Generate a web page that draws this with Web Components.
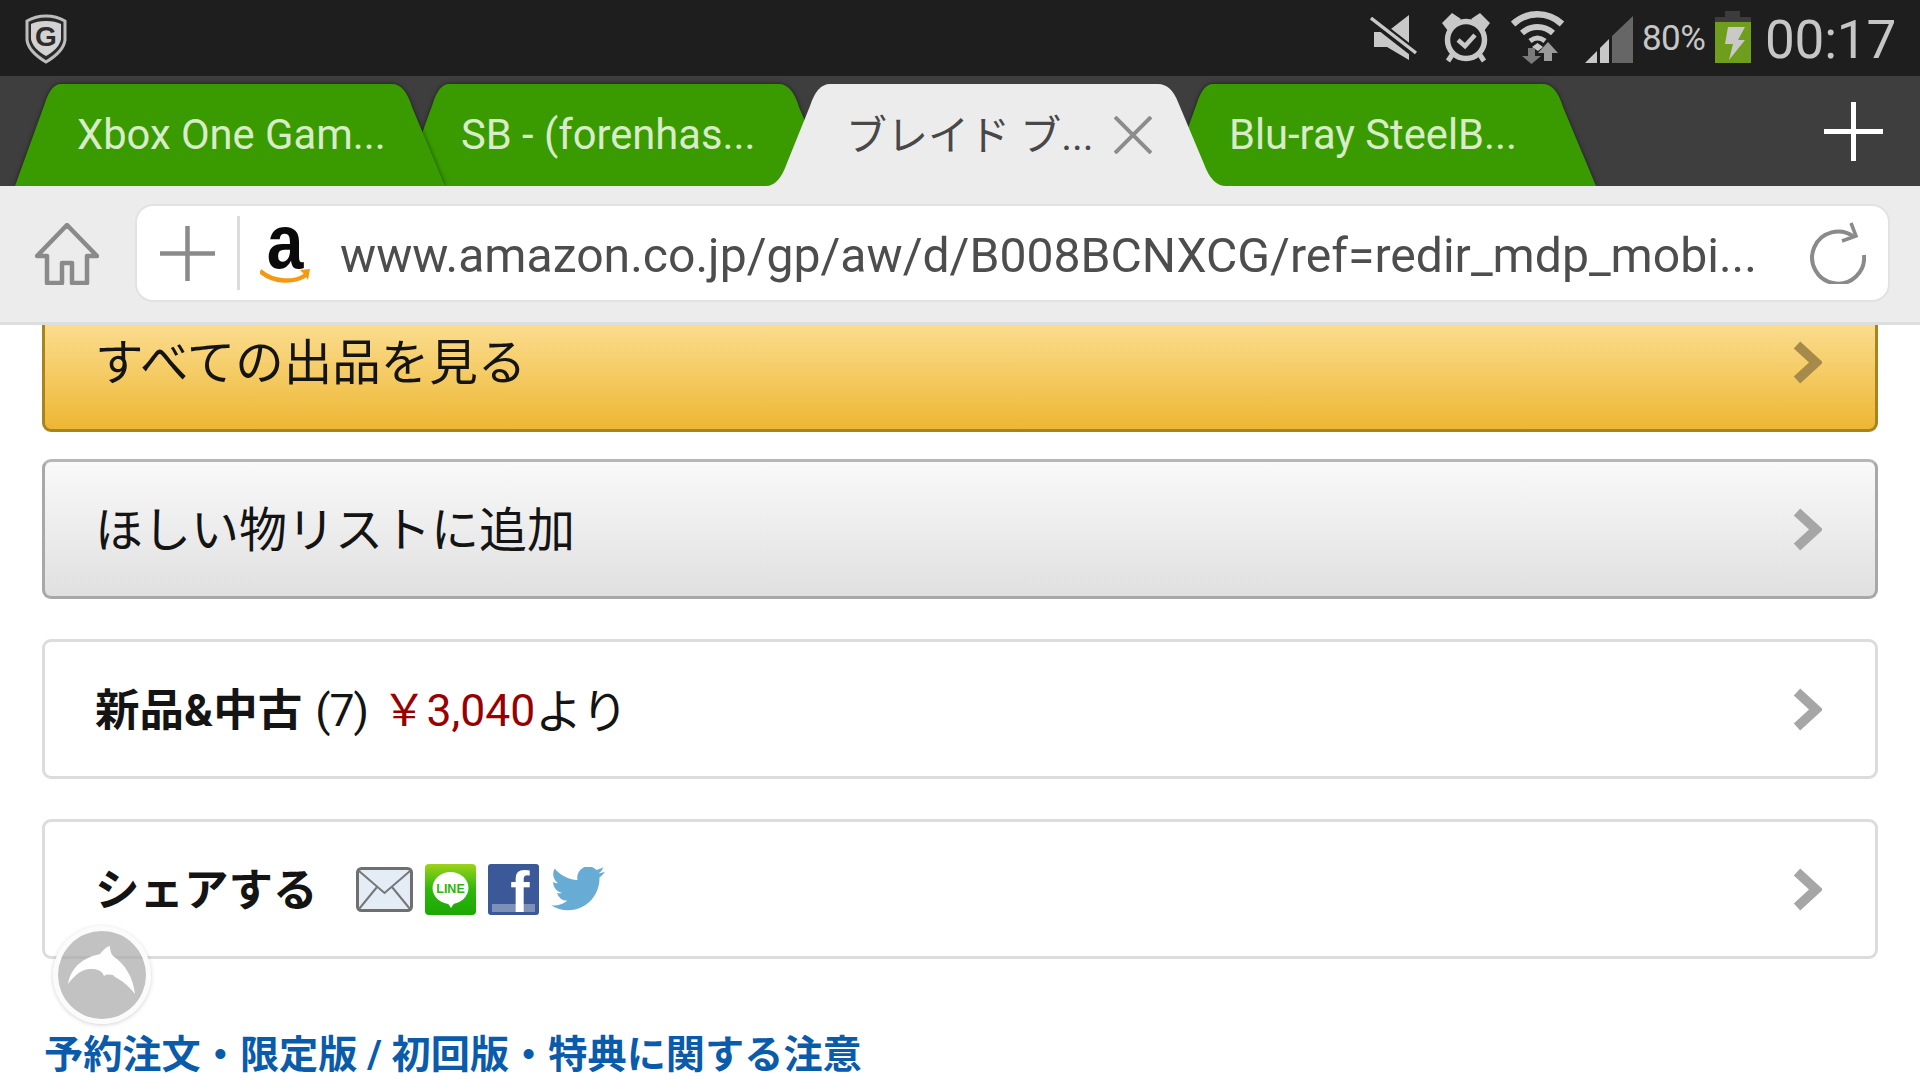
<!DOCTYPE html>
<html lang="ja"><head><meta charset="utf-8"><title>Browser</title>
<style>
html,body{margin:0;padding:0;background:#fff}
body{width:1920px;height:1080px;overflow:hidden;display:flex;flex-direction:column;font-family:Roboto,"Noto Sans CJK JP",sans-serif;position:relative}
</style></head><body>
<status-bar></status-bar>
<tab-strip>
  <browser-tab w="430" pad="62" z="2" gap="0">Xbox One Gam...</browser-tab>
  <browser-tab w="429" pad="58" z="1" gap="-42">SB - (forenhas...</browser-tab>
  <browser-tab w="460" pad="80" z="3" gap="-66" active>ブレイド ブ...</browser-tab>
  <browser-tab w="429" pad="62" z="1" gap="-59">Blu-ray SteelB...</browser-tab>
</tab-strip>
<url-bar>www.amazon.co.jp/gp/aw/d/B008BCNXCG/ref=redir_mdp_mobi...</url-bar>
<page-content>
  <action-row variant="yellow">すべての出品を見る</action-row>
  <action-row variant="gray">ほしい物リストに追加</action-row>
  <action-row variant="plain"><b>新品&amp;中古</b><span style="font-weight:400;margin-left:13px;letter-spacing:-1px">(7)</span><span style="color:#990000;font-weight:400;margin-left:14px">￥3,040</span><span style="font-size:47px">より</span></action-row>
  <action-row variant="plain"><b>シェアする</b><share-icons></share-icons></action-row>
  <notice-link>予約注文・限定版 / 初回版・特典に関する注意</notice-link>
</page-content>
<dolphin-fab></dolphin-fab>
<script>
function def(name,html){
  customElements.define(name,class extends HTMLElement{
    connectedCallback(){
      if(this.shadowRoot)return;
      const r=this.attachShadow({mode:'open'});
      r.innerHTML=typeof html==='function'?html(this):html;
    }
  });
}
def('status-bar',`<style>
:host{display:flex;align-items:flex-start;height:76px;background:#1e1e1e;flex:none;color:#c6c6c6;font-family:Roboto,sans-serif}
svg{display:block;flex:none}
.pct{font-size:35px;line-height:76px;margin-left:9px;letter-spacing:-.6px;height:76px;width:67px;transform:translateY(1px)}
.time{font-size:53px;font-weight:400;line-height:76px;margin-left:14px;letter-spacing:-.2px;transform:translateY(2px)}
</style>
<svg width="44" height="50" viewBox="0 0 44 50" style="margin:14px 0 0 24px">
 <path d="M22 2C14 2 8 4 3 7v19c1 9 9 16 19 22 10-6 18-13 19-22V7C36 4 30 2 22 2z" fill="#2a2a2a" stroke="#bdbdbd" stroke-width="3"/>
 <path d="M22 7c-6 0-11 1-15 3v15c1 7 8 13 15 17 7-4 14-10 15-17V10c-4-2-9-3-15-3z" fill="#d2d2d2"/>
 <text x="22" y="32" text-anchor="middle" font-family="Liberation Sans" font-weight="700" font-size="28" fill="#2c2c2c">G</text>
</svg>
<svg width="48" height="46" viewBox="0 0 48 46" style="margin:15px 0 0 1302px">
 <path d="M4 17H17L39 0V45L17 32H4z" fill="#c8c8c8"/>
 <path d="M0 3L46 39" stroke="#1e1e1e" stroke-width="9"/>
 <path d="M1 3L46 38" stroke="#c8c8c8" stroke-width="3.4"/>
</svg>
<svg width="48" height="50" viewBox="0 0 48 50" style="margin:13px 0 0 24px" fill="none" stroke="#c8c8c8">
 <circle cx="24" cy="27" r="18.500" stroke-width="5.500"/>
 <path d="M16 27l7 6 10-11" stroke-width="4.5"/>
 <path d="M0 10L10 0 19 6 6 18z M48 10L38 0 29 6 42 18z" fill="#c8c8c8" stroke="none"/>
 <path d="M10 42l-4 6M38 42l4 6" stroke-width="5"/>
</svg>
<svg width="54" height="54" viewBox="0 0 54 54" style="margin:10px 0 0 21px" fill="none" stroke="#c8c8c8">
 <path d="M2 14C16 1 37 1 51 14" stroke-width="6.5"/>
 <path d="M11 23C20 15 33 15 42 23" stroke-width="6"/>
 <path d="M19 31C24 27 29 27 34 31" stroke-width="5"/>
 <path d="M21 37L26.500 33 32 37 27 41z" fill="#c8c8c8" stroke="none"/>
 <path d="M17 38h7v8h6L20.500 54 11 46h6z" fill="#7a7a7a" stroke="none"/>
 <path d="M37 32l10 11h-6v8h-8V43h-6z" fill="#9a9a9a" stroke="none"/>
</svg>
<svg width="48" height="48" viewBox="0 0 48 48" style="margin:16px 0 0 20px">
 <path d="M0 47L12 35V47z" fill="#c8c8c8"/><path d="M15 32L24 23V47H15z" fill="#c8c8c8"/><path d="M27 20L48 0V47H27z" fill="#666"/>
</svg>
<span class="pct">80%</span>
<svg width="36" height="52" viewBox="0 0 36 52" style="margin:11px 0 0 6px">
 <rect x="10" width="15" height="7" fill="#3c3c3c"/><rect y="6" width="36" height="6" fill="#3c3c3c"/><rect y="11" width="36" height="41" fill="#6f9e1c"/>
 <path d="M13 16H30L23 29H30L14 49 18 33H10z" fill="#c9c9c9"/>
</svg>
<span class="time">00:17</span>`);
def('tab-strip',`<style>
:host{display:flex;flex:none;height:110px;box-sizing:border-box;padding:8px 37px 0 15px;background:#3e3e3e;overflow:hidden}
.add{margin-left:auto;width:59px;height:59px;margin-top:18px;flex:none}
</style><slot></slot>
<svg class="add" viewBox="0 0 59 59"><path d="M29.500 0V59M0 29.500H59" stroke="#fff" stroke-width="5" stroke-linecap="round"/></svg>`);
def('browser-tab',h=>{
  const w=+h.getAttribute('w'),p=h.getAttribute('pad'),active=h.hasAttribute('active');
  const d=active
   ?`M0 102Q13 102 21 79L44 22Q51 0 64 0H392Q405 0 412 18L438 80Q446 102 ${w} 102Z`
   :`M0 102L30 19Q36 0 46 0H${w-53}Q${w-40} 0 ${w-33} 23L${w} 102Z`;
  return `<style>
:host{display:grid;flex:none;width:${w}px;height:102px;margin-left:${h.getAttribute('gap')}px;z-index:${h.getAttribute('z')};position:relative}
.bg,.t{grid-area:1/1}
.bg{overflow:visible;${active?'':'filter:drop-shadow(0 0 2px rgba(0,0,0,.55))'}}
.t{position:relative;z-index:1;padding-left:${p}px;font-size:${active?'41px':'41.700px'};height:102px;color:${active?'#484848':'#d9ecca'};white-space:nowrap;font-family:Roboto,"Noto Sans CJK JP",sans-serif}
.row{display:flex;align-items:center;height:102px;transform:translateY(${active?-3:-1}px)}
.x{margin-left:20px;transform:translateY(3px)}
</style>
<svg class="bg" width="${w}" height="102"><path d="${d}" fill="${active?'#ececec':'#399b00'}"/></svg>
<div class="t"><div class="row"><slot></slot>${active?'<svg class="x" width="38" height="38" viewBox="0 0 38 38"><path d="M1 1L37 37M37 1L1 37" stroke="#8c8c8c" stroke-width="4"/></svg>':''}</div></div>`;
});
def('url-bar',`<style>
:host{display:flex;flex:none;height:139px;box-sizing:border-box;padding:18px 30px 0 35px;background:#ececec;border-bottom:3px solid #dedede}
.home{margin-top:19px;flex:none}
.box{margin-left:36px;flex:1;height:98px;box-sizing:border-box;background:#fff;border:2px solid #e2e2e2;border-radius:18px;display:flex;align-items:center;padding-left:23px}
.sep{width:3px;height:74px;background:#dcdcdc;margin-left:22px;flex:none}
.logo{width:50px;margin-left:20px;height:72px;flex:none;display:grid;justify-items:center}
.logo span,.logo svg{grid-area:1/1}
.logo span{font:700 66px/66px "Liberation Sans",sans-serif;color:#0a0a0a;transform:translateY(-8px) scaleY(1.14)}
.logo svg{align-self:end;transform:translateY(-3px)}
.u{margin-left:30px;font:400 48.100px/1 Roboto,sans-serif;color:#4d4d4d;white-space:nowrap;transform:translateY(3px)}
.re{margin-left:auto;margin-right:22px;flex:none}
</style>
<svg class="home" width="64" height="62" viewBox="0 0 64 62" fill="none" stroke="#8a8a8a" stroke-width="4.500" stroke-linejoin="round">
 <path d="M32 2L2 33H12V60H27V40H37V60H52V33H62z"/></svg>
<div class="box">
 <svg width="55" height="55" viewBox="0 0 55 55"><path d="M27.500 0V55M0 27.500H55" stroke="#8a8a8a" stroke-width="4.500"/></svg>
 <div class="sep"></div>
 <div class="logo"><span>a</span><svg width="50" height="20" viewBox="0 0 50 20"><path d="M0 5C14 17 34 17 46 9" fill="none" stroke="#f39a12" stroke-width="4.500"/><path d="M40 4L50 3 48 14 45 9z" fill="#f39a12"/></svg></div>
 <span class="u"><slot></slot></span>
 <svg class="re" width="58" height="62" viewBox="0 0 58 62" fill="none" stroke="#8a8a8a" stroke-width="4"><path d="M46 15A26 26 0 1 0 56 33"/><path d="M43 1L48 14 34 19" stroke-width="3.500"/></svg>
</div>`);
def('page-content',`<style>
:host{display:flex;flex-direction:column;flex:1;min-height:0;overflow:hidden;padding:0 42px;font-family:Roboto,"Noto Sans CJK JP",sans-serif;color:#111}
::slotted(action-row:nth-child(1)){margin-top:-33px}
::slotted(action-row:nth-child(2)){margin-top:27px}
::slotted(action-row:nth-child(3)),::slotted(action-row:nth-child(4)){margin-top:40px}
</style><slot></slot>`);
def('action-row',h=>{
  const v=h.getAttribute('variant');
  const m={yellow:['linear-gradient(#ffe7a8,#edb733)','#a88420','#a68a4a','48.500px',2],
           gray:['linear-gradient(#f9f9f9,#e0e0e0)','#a8a8a8','#a6a6a6','48px',2],
           plain:['#fff','#dcdcdc','#a6a6a6','44.500px',3]}[v];
  return `<style>
:host{display:flex;align-items:center;flex:none;height:140px;box-sizing:border-box;background:${m[0]};border:3px solid ${m[1]};${v==='gray'?'border-top-color:#b6b6b6;':''}border-radius:9px;padding:0 53px 0 50px;font-size:${m[3]};line-height:1.2;color:#141414}
.c{margin-left:auto;flex:none}
.s{display:flex;align-items:center;transform:translateY(${m[4]}px)}
</style><div class="s"><slot></slot></div>
<svg class="c" width="29" height="43" viewBox="0 0 29 43"><path d="M4 4L23 21.500 4 39" fill="none" stroke="${m[2]}" stroke-width="9.500"/></svg>`;
});
def('share-icons',`<style>
:host{display:flex;align-items:center;margin-left:38px;height:51px;transform:translateY(-2px)}
svg{display:block;flex:none}
</style>
<svg width="57" height="45" viewBox="0 0 57 45"><rect x="1.500" y="1.500" width="54" height="42" rx="4" fill="#e4edf6" stroke="#6f6f6f" stroke-width="3"/><path d="M3 4L28.500 26 54 4M3 42L21 20M54 42L36 20" fill="none" stroke="#777" stroke-width="2"/></svg>
<svg width="51" height="51" viewBox="0 0 51 51" style="margin-left:12px"><defs><linearGradient id="lg" x1="0" y1="0" x2="0" y2="1"><stop offset="0" stop-color="#9ed21a"/><stop offset=".5" stop-color="#2cb80c"/><stop offset="1" stop-color="#1ea705"/></linearGradient></defs><rect width="51" height="51" rx="4" fill="url(#lg)"/><ellipse cx="25.500" cy="24" rx="18" ry="16" fill="#fff"/><path d="M22 38h8l-4 6z" fill="#fff"/><text x="25.500" y="29" text-anchor="middle" font-family="Liberation Sans" font-size="12.500" font-weight="700" fill="#2fb50e">LINE</text></svg>
<svg width="51" height="51" viewBox="0 0 51 51" style="margin-left:12px"><rect width="51" height="51" rx="3" fill="#3b5998"/><rect x="4" y="40" width="43" height="8" fill="#7d90b9"/><text x="32" y="48" text-anchor="middle" font-family="Liberation Sans" font-size="58" font-weight="700" fill="#fff">f</text></svg>
<svg width="54" height="45" viewBox="0 0 24 20" style="margin-left:12px"><path transform="translate(0 -2.500)" d="M23.950 4.570a10 10 0 01-2.820.770 4.960 4.960 0 002.160-2.720c-.950.550-2 .950-3.120 1.170a4.920 4.920 0 00-8.380 4.480C7.690 8.090 4.070 6.130 1.640 3.160a4.820 4.820 0 00-.670 2.480c0 1.710.870 3.210 2.190 4.100a4.900 4.900 0 01-2.230-.610v.060c0 2.390 1.700 4.380 3.950 4.830a5 5 0 01-2.220.080 4.940 4.940 0 004.600 3.420A9.870 9.870 0 010 19.540a13.940 13.940 0 007.550 2.210c9.060 0 14-7.500 14-13.980 0-.210 0-.420-.020-.630a9.940 9.940 0 002.460-2.550z" fill="#66acd4"/></svg>`);
def('notice-link',`<style>
:host{display:block;margin:72px 0 0 2px;font:700 39.200px/48px Roboto,"Noto Sans CJK JP",sans-serif;color:#0b5bab;white-space:nowrap}
</style><slot></slot>`);
def('dolphin-fab',`<style>
:host{position:absolute;left:53px;top:926px;width:98px;height:98px;display:block;box-sizing:border-box;border-radius:50%;border:5px solid rgba(255,255,255,.95);background:rgba(170,170,170,.72);box-shadow:0 1px 4px rgba(0,0,0,.18)}
svg{display:block;margin:-5px}
</style>
<svg width="98" height="98" viewBox="53 926 98 98"><path d="M68 984C71 966 85 957 100 954 103 950 106 947 110 946 110 950 111 954 113 956 125 964 133 977 135 994 128 985 121 980 115 977 113 974 107 974 104 976 102 971 98 969 92 969 84 968 76 973 68 984z" fill="#fff"/></svg>`);
</script>
</body></html>
